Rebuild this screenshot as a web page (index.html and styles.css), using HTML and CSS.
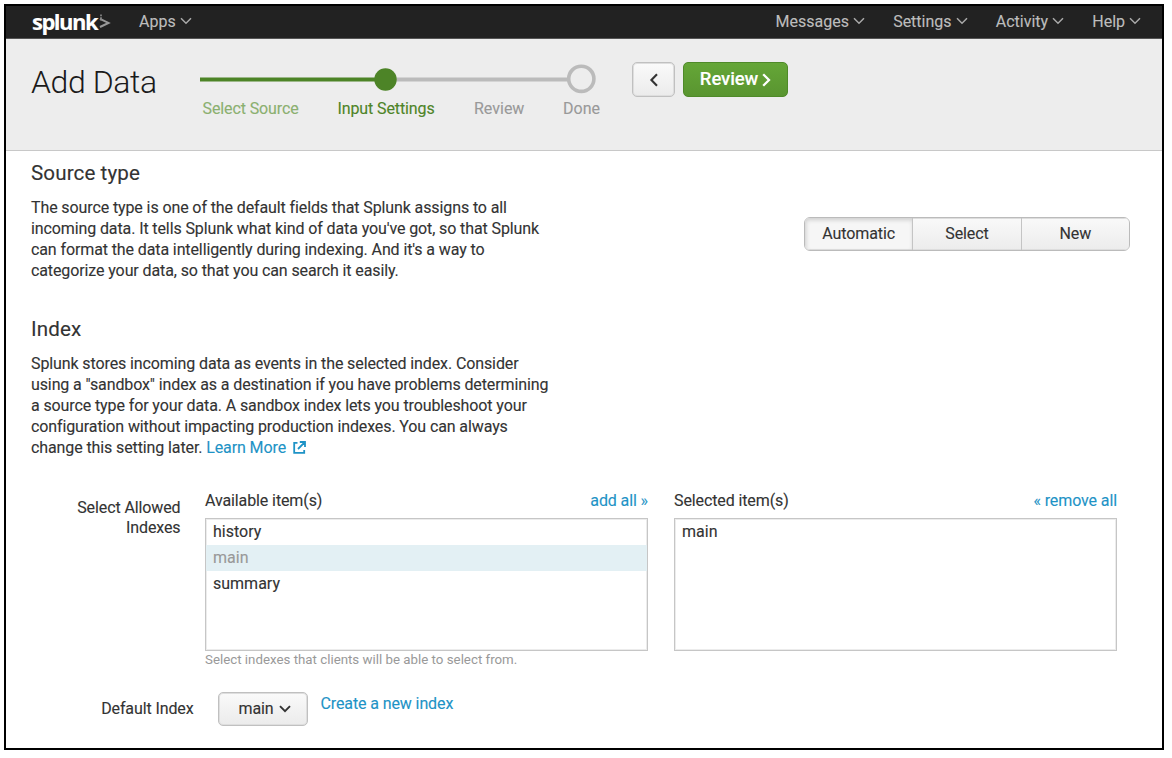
FILE: index.html
```html
<!DOCTYPE html>
<html lang="en">
<head>
<meta charset="utf-8">
<title>Add Data | Splunk</title>
<link rel="stylesheet" href="styles.css">
</head>
<body>
<div class="frame">
  <nav class="navbar">
    <a class="logo"><span class="logo-word">splunk</span><svg class="logo-mark" width="12" height="15" viewBox="0 0 12 15"><path d="M1 4.8L9.5 8.9L1 13" fill="none" stroke="#999" stroke-width="2"/><path d="M2 .6V2.2M2 3.2V6.5" stroke="#888" stroke-width="1.7"/></svg></a>
    <a class="nav-item apps">Apps <svg class="caret" width="12" height="8" viewBox="0 0 12 8"><path d="M1 1.2L6 6.2L11 1.2"/></svg></a>
    <div class="nav-right">
      <a class="nav-item">Messages <svg class="caret" width="12" height="8" viewBox="0 0 12 8"><path d="M1 1.2L6 6.2L11 1.2"/></svg></a>
      <a class="nav-item">Settings <svg class="caret" width="12" height="8" viewBox="0 0 12 8"><path d="M1 1.2L6 6.2L11 1.2"/></svg></a>
      <a class="nav-item">Activity <svg class="caret" width="12" height="8" viewBox="0 0 12 8"><path d="M1 1.2L6 6.2L11 1.2"/></svg></a>
      <a class="nav-item">Help <svg class="caret" width="12" height="8" viewBox="0 0 12 8"><path d="M1 1.2L6 6.2L11 1.2"/></svg></a>
    </div>
  </nav>
  <header class="header">
    <h1>Add Data</h1>
    <div class="wizard">
      <svg class="track" width="400" height="30" viewBox="0 0 400 30"><path d="M186 15.5H368" stroke="#bbb" stroke-width="4"/><path d="M0 15.5H186" stroke="#4d8427" stroke-width="4"/><circle cx="185.5" cy="15.5" r="11.2" fill="#4d8427"/><circle cx="381.3" cy="14.8" r="12.6" fill="none" stroke="#bbb" stroke-width="3.6"/></svg>
      <div class="steps">
        <span class="step done">Select Source</span>
        <span class="step active">Input Settings</span>
        <span class="step">Review</span>
        <span class="step">Done</span>
      </div>
    </div>
    <div class="actions">
      <button class="btn back" aria-label="Back"><svg width="10" height="14" viewBox="0 0 10 14"><path d="M8 1.2L2.4 7L8 12.8" fill="none" stroke="#333" stroke-width="2.1"/></svg></button>
      <button class="btn primary">Review<svg width="9" height="14" viewBox="0 0 9 14"><path d="M1.2 1.2L7 7L1.2 12.8" fill="none" stroke="#fff" stroke-width="2.3"/></svg></button>
    </div>
  </header>
  <main class="content">
    <section class="source">
      <div>
        <h2>Source type</h2>
        <p>The source type is one of the default fields that Splunk assigns to all<br>incoming data. It tells Splunk what kind of data you've got, so that Splunk<br>can format the data intelligently during indexing. And it's a way to<br>categorize your data, so that you can search it easily.</p>
      </div>
      <div class="segmented">
        <button class="seg on">Automatic</button><button class="seg">Select</button><button class="seg">New</button>
      </div>
    </section>
    <section class="index">
      <h2>Index</h2>
      <p>Splunk stores incoming data as events in the selected index. Consider<br>using a "sandbox" index as a destination if you have problems determining<br>a source type for your data. A sandbox index lets you troubleshoot your<br>configuration without impacting production indexes. You can always<br>change this setting later. <a class="link">Learn More <svg class="ext" width="13" height="13" viewBox="0 0 13 13"><path d="M4.5 1.8H1.2V11.8H11.2V9M6.8 1H12V6M11.6 1.4L5 8" fill="none" stroke="#1e93c6" stroke-width="1.8"/></svg></a></p>
    </section>
    <div class="picker">
      <label class="picker-label">Select Allowed<br>Indexes</label>
      <div class="column">
        <div class="column-head"><span>Available item(s)</span><a class="link">add all »</a></div>
        <ul class="list"><li>history</li><li class="chosen">main</li><li>summary</li></ul>
        <div class="help">Select indexes that clients will be able to select from.</div>
      </div>
      <div class="column">
        <div class="column-head"><span>Selected item(s)</span><a class="link">« remove all</a></div>
        <ul class="list"><li>main</li></ul>
      </div>
    </div>
    <div class="default-row">
      <label class="default-label">Default Index</label>
      <button class="btn select">main <svg width="12" height="8" viewBox="0 0 12 8"><path d="M1 1.2L6 6.2L11 1.2" fill="none" stroke="#333" stroke-width="1.9"/></svg></button>
      <a class="link create">Create a new index</a>
    </div>
  </main>
</div>
</body>
</html>
```
FILE: styles.css
```css
* { box-sizing: border-box; }
body { margin: 0; padding: 4px; background: #fff; font-family: Roboto, "Liberation Sans", sans-serif; font-size: 16px; line-height: 20.8px; letter-spacing: -0.11px; color: #333; -webkit-text-stroke: 0.12px; }
h1, h2, p, ul { margin: 0; padding: 0; font-weight: 400; }
button { font: inherit; letter-spacing: inherit; color: inherit; padding: 0; }
.frame { width: 1160px; height: 746px; border: 2px solid #000; white-space: nowrap; overflow: hidden; }
.navbar { display: flex; height: 33px; background: #222; border-bottom: 1px solid #555; color: #bdbdbd; padding-left: 26px; }
.logo { display: flex; width: 107px; color: #fff; }
.logo-word { font: 700 22px/30px "Open Sans", sans-serif; letter-spacing: -1.5px; }
.logo-mark { margin: 8px 0 0 2px; }
.nav-item { line-height: 31px; letter-spacing: 0; }
.nav-right { display: flex; gap: 28.2px; margin-left: auto; padding-right: 21px; }
.caret { fill: none; stroke: #aaa; stroke-width: 1.5; margin-bottom: 2px; }
.header { display: flex; height: 112px; background: #ededed; border-bottom: 1px solid #c8c8c8; padding-left: 25px; }
h1 { width: 169px; font-weight: 300; font-size: 32px; line-height: 40px; letter-spacing: -0.4px; color: #1a1a1a; padding-top: 23px; -webkit-text-stroke: 0; }
.wizard { width: 432px; padding-top: 25px; }
.track { display: block; }
.steps { display: flex; padding: 5px 0 0 2.5px; color: #999; }
.step.done { color: #8bb070; width: 135px; }
.step.active { color: #4d8427; width: 136.5px; }
.step:nth-child(3) { width: 89px; letter-spacing: 0; }
.step:nth-child(4) { letter-spacing: 0; }
.actions { display: flex; gap: 8px; padding-top: 23px; }
.btn { display: flex; align-items: center; justify-content: center; height: 35px; border: 1px solid #c0c0c0; box-shadow: inset 0 0 0 1px #dedede; border-radius: 5px; background: linear-gradient(#fafafa, #ebebeb); }
.back { width: 43px; }
.primary { width: 105px; gap: 4px; background: linear-gradient(#65a637, #599530); border-color: #4f8a29; box-shadow: none; color: #fff; font-size: 18.5px; font-weight: 500; }
.content { padding: 10px 0 0 25px; }
h2 { font-size: 20.6px; line-height: 24px; letter-spacing: 0.1px; }
.source { display: flex; justify-content: space-between; padding-right: 33px; height: 156px; }
p { padding-top: 13px; line-height: 20.9px; }
.segmented { display: flex; width: 326px; height: 34px; margin: 56px -1px 0 0; border: 1px solid #bbb; border-radius: 6px; overflow: hidden; box-shadow: inset 0 0 0 1px #ddd; }
.seg { flex: 1; border: 0; background: linear-gradient(#f9f9f9, #ececec); box-shadow: inset 0 1px #ddd, inset 0 -1px #ddd; }
.seg + .seg { border-left: 1px solid #c4c4c4; }
.seg.on { background: #f6f6f6; box-shadow: inset 1px 2px 4px #ccc, inset 0 -1px #ddd; }
.index { height: 173px; }
.link { color: #1e93c6; }
.ext { margin-left: 3px; vertical-align: -1px; }
.picker { display: flex; height: 188px; padding-top: 1px; }
.picker-label { width: 149.5px; margin-right: 24.5px; padding-top: 6.5px; text-align: right; }
.column { width: 443px; margin-right: 26px; }
.column-head { display: flex; justify-content: space-between; }
.list { height: 133px; margin-top: 6px; border: 1px solid #c6c6c6; box-shadow: inset 0 0 0 1px #ececec; list-style: none; }
li { height: 26px; line-height: 26px; padding-left: 7px; letter-spacing: 0; }
.chosen { background: #e3f0f4; color: #999; }
.help { font-size: 13.3px; line-height: 18px; letter-spacing: 0; color: #999; -webkit-text-stroke: 0; }
.default-row { display: flex; padding-top: 14px; }
.default-label { width: 162.5px; margin-right: 24.5px; line-height: 34px; text-align: right; }
.select { width: 90px; height: 34px; gap: 5px; padding-left: 3px; }
.create { margin-left: 12.5px; line-height: 24px; }
```
